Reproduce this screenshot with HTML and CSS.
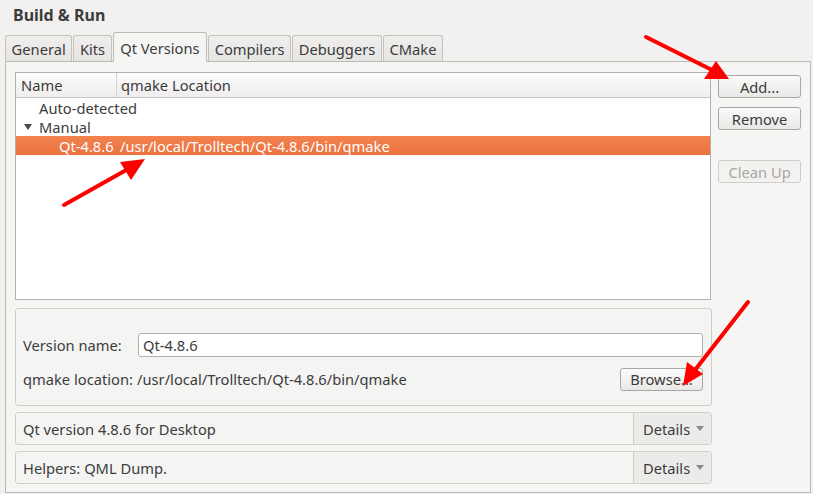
FILE: index.html
```html
<!DOCTYPE html>
<html>
<head>
<meta charset="utf-8">
<link rel="stylesheet" href="styles.css">
</head>
<body>
<div class="page">
  <h1 class="title">Build &amp; Run</h1>
  <div class="tabs">
    <div class="tab">General</div>
    <div class="tab">Kits</div>
    <div class="tab active">Qt Versions</div>
    <div class="tab">Compilers</div>
    <div class="tab">Debuggers</div>
    <div class="tab">CMake</div>
  </div>
  <div class="panel">
    <div class="top">
      <div class="tree">
        <div class="thead">
          <div class="col c1">Name</div>
          <div class="col c2">qmake Location</div>
        </div>
        <div class="row"><span class="i1">Auto-detected</span></div>
        <div class="row"><span class="caret"></span><span>Manual</span></div>
        <div class="row sel"><span class="i2">Qt-4.8.6</span><span class="path">/usr/local/Trolltech/Qt-4.8.6/bin/qmake</span></div>
      </div>
      <div class="btns">
        <button class="btn">Add...</button>
        <button class="btn">Remove</button>
        <button class="btn disabled cleanup">Clean Up</button>
      </div>
    </div>
    <div class="box version">
      <div class="frow">
        <span class="lbl">Version name:</span>
        <div class="input">Qt-4.8.6</div>
      </div>
      <div class="frow">
        <span class="lbl">qmake location:</span>
        <span class="loc">/usr/local/Trolltech/Qt-4.8.6/bin/qmake</span>
        <button class="btn browse">Browse...</button>
      </div>
    </div>
    <div class="box detail">
      <span class="dtext">Qt version 4.8.6 for Desktop</span>
      <div class="dbtn">Details <span class="dcaret"></span></div>
    </div>
    <div class="box detail">
      <span class="dtext">Helpers: QML Dump.</span>
      <div class="dbtn">Details <span class="dcaret"></span></div>
    </div>
  </div>
  <svg class="arrows" width="813" height="494" viewBox="0 0 813 494">
    <g stroke="#ff0000" stroke-width="4" stroke-linecap="round" fill="#ff0000">
      <line x1="646" y1="37" x2="712" y2="70"/>
      <polygon points="729,79 704,79 716,61" stroke="none"/>
      <line x1="64" y1="205" x2="128" y2="169"/>
      <polygon points="145,159 131,180 120,162" stroke="none"/>
      <line x1="748" y1="302" x2="695" y2="370"/>
      <polygon points="683,386 687,362 703,374" stroke="none"/>
    </g>
  </svg>
</div>
</body>
</html>
```

FILE: styles.css
```css
* { box-sizing: border-box; }
html, body { margin: 0; padding: 0; }
body {
  background: #f2f1f0;
  font-family: "Noto Sans", "DejaVu Sans", sans-serif;
  font-size: 14.7px;
  color: #3c3c3c;
}
.page {
  position: relative;
  width: 813px;
  height: 494px;
  overflow: hidden;
}
.title {
  margin: 0;
  padding: 4px 0 0 13px;
  height: 33px;
  font-size: 16px;
  font-weight: bold;
  color: #3c3c3c;
}
.tabs {
  display: flex;
  padding-left: 5px;
  height: 29px;
  align-items: flex-end;
  position: relative;
  z-index: 2;
}
.tab {
  height: 26px;
  padding: 0 5.6px;
  border: 1px solid #c4c2be;
  border-bottom: none;
  border-radius: 3px 3px 0 0;
  background: linear-gradient(#efeeec, #e6e5e3);
  display: flex;
  align-items: center;
  margin-right: 1px;
  margin-bottom: 1px;
}
.tab.active {
  height: 30px;
  margin-bottom: 0;
  background: #f5f5f4;
  padding: 0 6.5px;
  border-color: #bcbab6;
}
.panel {
  margin: -1px 0 0 5px;
  width: 806px;
  height: 432px;
  border: 1px solid #bcbab6;
  background: #f5f5f4;
  padding: 10px 9px 0 9px;
}
.top {
  display: flex;
  gap: 7px;
}
.tree {
  width: 697px;
  height: 228px;
  border: 1px solid #b2b0ac;
  background: #ffffff;
}
.thead {
  display: flex;
  height: 25px;
  border-bottom: 1px solid #c8c6c2;
  background: linear-gradient(#fbfbfb, #efeeed);
}
.col {
  display: flex;
  align-items: center;
  padding-left: 5px;
}
.c1 { width: 101px; border-right: 1px solid #d6d4d0; }
.c2 { flex: 1; padding-left: 4px; }
.row {
  height: 19px;
  display: flex;
  align-items: center;
  white-space: nowrap;
}
.i1 { padding-left: 23px; }
.caret {
  width: 0; height: 0;
  margin: 0 7px 0 8px;
  border-left: 4px solid transparent;
  border-right: 4px solid transparent;
  border-top: 6px solid #4a4a4a;
}
.sel {
  background: linear-gradient(#f2834f, #ec7240);
  color: #ffffff;
}
.i2 { padding-left: 43px; width: 101px; }
.path { padding-left: 3px; }
.btns {
  display: flex;
  flex-direction: column;
  width: 83px;
  padding-top: 3px;
}
.btn {
  font-family: inherit;
  font-size: 14.7px;
  color: #3c3c3c;
  height: 23px;
  border: 1px solid #a9a7a3;
  border-radius: 3px;
  background: linear-gradient(#fbfbfb, #e9e8e6);
  padding: 0;
  margin: 0;
}
.btns .btn { margin-bottom: 9px; }
.btn.disabled {
  color: #a7a6a4;
  border-color: #cfcdca;
  background: #f3f2f1;
}
.cleanup { margin-top: 21px; }
.box {
  width: 697px;
  border: 1px solid #d0ceca;
  border-radius: 3px;
  background: #f4f4f3;
}
.version {
  margin-top: 8px;
  height: 98px;
  padding: 24px 8px 0 7px;
}
.frow {
  display: flex;
  align-items: center;
  height: 24px;
  margin-bottom: 10px;
}
.lbl { width: 115px; flex-shrink: 0; white-space: nowrap; }
.input {
  flex: 1;
  height: 24px;
  border: 1px solid #b2b0ac;
  border-radius: 3px;
  background: #ffffff;
  padding-left: 4px;
  display: flex;
  align-items: center;
}
.loc { flex: 1; margin-left: -1px; }
.browse { width: 83px; }
.detail {
  margin-top: 6px;
  height: 33px;
  display: flex;
  align-items: center;
  padding-left: 7px;
}
.dtext { flex: 1; }
.dbtn {
  width: 78px;
  height: 31px;
  border-left: 1px solid #d0ceca;
  background: #ebebea;
  display: flex;
  align-items: center;
  padding-left: 9px;
}
.dcaret {
  width: 0; height: 0;
  margin-left: 6px;
  border-left: 4px solid transparent;
  border-right: 4px solid transparent;
  border-top: 5px solid #8a8a8a;
}
.arrows {
  position: absolute;
  left: 0;
  top: 0;
  pointer-events: none;
}
```
